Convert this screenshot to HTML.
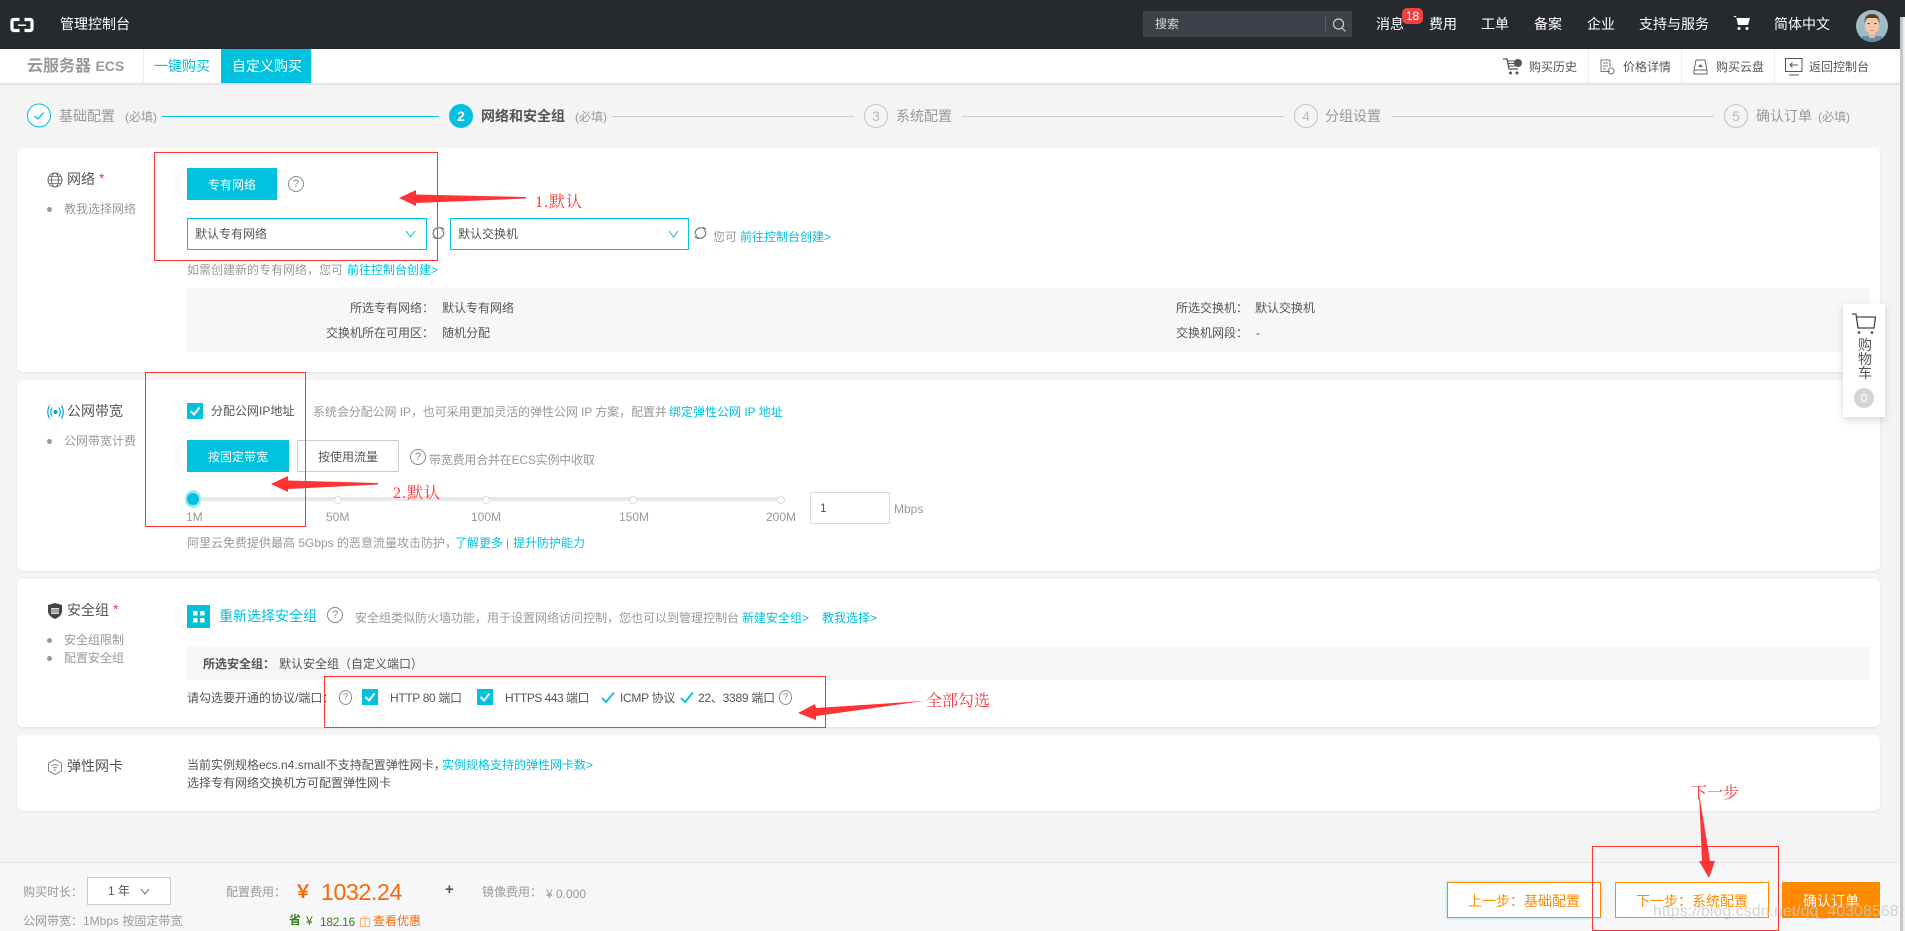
<!DOCTYPE html>
<html lang="zh"><head><meta charset="utf-8"><title>云服务器 ECS</title>
<style>
html,body{margin:0;padding:0;width:1905px;height:931px;overflow:hidden;background:#f4f4f5}
body{position:relative;font-family:"Liberation Sans","Noto Sans CJK SC",sans-serif;font-size:12px;color:#555}
.a{position:absolute;box-sizing:border-box}
.t{position:absolute;white-space:nowrap;line-height:20px;height:20px}
.g{color:#999}.d{color:#555}.l{color:#00c1de}.w{color:#fff}
.f14{font-size:14px}.f12{font-size:12px}
.card{position:absolute;left:17px;width:1863px;background:#fff;border-radius:6px;box-shadow:0 1px 2px rgba(0,0,0,.07)}
.q{position:absolute;width:16px;height:16px;box-sizing:border-box;border:1px solid #888;border-radius:50%;color:#888;font-size:11px;line-height:14px;text-align:center}
.st{position:absolute;width:24px;height:24px;top:104px;box-sizing:border-box;border:1px solid #c4c4c4;border-radius:50%;color:#bbb;font-size:14px;line-height:22px;text-align:center}
.ln{position:absolute;top:116px;height:1px;background:#ccc}
.dot{position:absolute;width:5px;height:5px;border-radius:50%;background:#999}
.btn{position:absolute;background:#00c1de;color:#fff;text-align:center;font-size:12px}
.chk{position:absolute;width:16px;height:16px;background:#00c1de}
.sl{position:absolute;top:496px;width:8px;height:8px;margin-left:-4px;background:#fff;border:1px solid #ddd;border-radius:50%;box-sizing:border-box}
.sel{position:absolute;top:218px;height:32px;box-sizing:border-box;border:1px solid #00c1de}
.div{position:absolute;top:49px;height:34px;width:1px;background:#eee}
.anno{position:absolute;white-space:nowrap;font-family:"Liberation Serif","Noto Serif CJK SC",serif;font-size:16px;color:#f33;line-height:20px}
</style></head><body>

<div class="a" style="left:0;top:0;width:1905px;height:49px;background:#262a2f"></div>
<svg class="a" style="left:10px;top:17px" width="24" height="16" viewBox="0 0 24 16"><path d="M9.500 2.500H4Q2 2.500 2 4.500V11.500Q2 13.500 4 13.500H9.500M14.500 2.500H20Q22 2.500 22 4.500V11.500Q22 13.500 20 13.500H14.500" fill="none" stroke="#fff" stroke-width="3.200"/><rect x="8" y="7.500" width="8" height="1.500" fill="#fff"/></svg>
<div class="t f14 w" style="left:60px;top:14px">管理控制台</div>

<div class="a" style="left:1143px;top:11px;width:209px;height:26px;background:#3e4147"></div>
<div class="t f12" style="left:1155px;top:14px;color:#d8d8d8">搜索</div>
<div class="a" style="left:1325px;top:16px;width:1px;height:16px;background:#5a5d62"></div>
<svg class="a" style="left:1332px;top:17px" width="15" height="16" viewBox="0 0 15 16"><circle cx="6.500" cy="7" r="5" fill="none" stroke="#ccc" stroke-width="1.200"/><path d="M10 11L13.500 14.500" stroke="#ccc" stroke-width="1.200"/></svg>

<div class="t f14 w" style="left:1376px;top:14px">消息</div>
<div class="a w" style="left:1402px;top:8px;width:21px;height:16px;background:#f04142;border-radius:5px;text-align:center;line-height:16px;font-size:12px">18</div>
<div class="t f14 w" style="left:1429px;top:14px">费用</div>
<div class="t f14 w" style="left:1481px;top:14px">工单</div>
<div class="t f14 w" style="left:1534px;top:14px">备案</div>
<div class="t f14 w" style="left:1587px;top:14px">企业</div>
<div class="t f14 w" style="left:1639px;top:14px">支持与服务</div>
<svg class="a" style="left:1733px;top:15px" width="18" height="16" viewBox="0 0 18 16"><path d="M0 1H3L5 10H15L17 3H4Z" fill="#fff"/><circle cx="6" cy="13.500" r="1.500" fill="#fff"/><circle cx="14" cy="13.500" r="1.500" fill="#fff"/></svg>
<div class="t f14 w" style="left:1774px;top:14px">简体中文</div>
<svg class="a" style="left:1856px;top:10px" width="32" height="32" viewBox="0 0 32 32"><defs><clipPath id="av"><circle cx="16" cy="16" r="16"/></clipPath></defs><g clip-path="url(#av)"><rect width="32" height="32" fill="#9fbcc6"/><rect x="6" y="26" width="20" height="8" fill="#5f8fa8"/><rect x="13" y="21" width="6" height="7" fill="#e8b596"/><ellipse cx="16" cy="15" rx="7" ry="9" fill="#f2c6a6"/><path d="M8.500 14Q8 4 16 4Q24 4 23.500 14Q22.500 8 20 8H12Q9.500 8 8.500 14Z" fill="#5a3c2e"/><rect x="11.500" y="13" width="2" height="1" fill="#333"/><rect x="18.500" y="13" width="2" height="1" fill="#333"/><rect x="14.500" y="20" width="3" height="1" fill="#c9806a"/></g></svg>

<div class="a" style="left:0;top:49px;width:1905px;height:34px;background:#fff;box-shadow:0 1px 3px rgba(0,0,0,.12)"></div>
<div class="t" style="left:27px;top:56px;font-size:16px;font-weight:bold;color:#999">云服务器 <span style="font-size:14px">ECS</span></div>
<div class="div" style="left:143px"></div>
<div class="t f14 l" style="left:154px;top:56px">一键购买</div>
<div class="a" style="left:221px;top:49px;width:90px;height:34px;background:#00c1de"></div>
<div class="t f14 w" style="left:232px;top:56px">自定义购买</div>

<svg class="a" style="left:1503px;top:58px" width="20" height="18" viewBox="0 0 20 18"><path d="M0 1H4L6 11H15" fill="none" stroke="#555" stroke-width="1.300"/><path d="M5 3H12M5.500 5.500H12M6 8H13" stroke="#555"/><circle cx="15" cy="5" r="4" fill="#555"/><circle cx="7.500" cy="15" r="1.500" fill="#555"/><circle cx="14" cy="15" r="1.500" fill="#555"/></svg>
<div class="t f12 d" style="left:1529px;top:57px">购买历史</div>
<div class="div" style="left:1588px"></div>
<svg class="a" style="left:1600px;top:59px" width="15" height="16" viewBox="0 0 15 16"><path d="M10 12.500H1V1H10V8M3 4H8M3 7H8M3 10H6" fill="none" stroke="#777"/><circle cx="11" cy="12" r="3" fill="none" stroke="#777"/></svg>
<div class="t f12 d" style="left:1623px;top:57px">价格详情</div>
<div class="div" style="left:1681px"></div>
<svg class="a" style="left:1693px;top:59px" width="15" height="16" viewBox="0 0 15 16"><path d="M3 1H12L14 11V15H1V11Z" fill="none" stroke="#666"/><path d="M1 11H14" stroke="#666"/><path d="M5 8L7.500 5L10 8Z" fill="#666"/></svg>
<div class="t f12 d" style="left:1716px;top:57px">购买云盘</div>
<div class="div" style="left:1774px"></div>
<svg class="a" style="left:1785px;top:58px" width="18" height="18" viewBox="0 0 18 18"><rect x=".5" y=".5" width="16.500" height="13" fill="none" stroke="#555"/><path d="M4 17H14" stroke="#555"/><path d="M13 7H5M7.500 4.500L5 7L7.500 9.500" fill="none" stroke="#555"/></svg>
<div class="t f12 d" style="left:1809px;top:57px">返回控制台</div>

<!-- steps -->
<svg class="a" style="left:27px;top:103px" width="24" height="25" viewBox="0 0 24 25"><circle cx="12" cy="12.500" r="11.500" fill="#fff" stroke="#00c1de"/><path d="M7.500 13L11 16L16.500 9.500" fill="none" stroke="#00c1de" stroke-width="1.300"/></svg>
<div class="t f14 g" style="left:59px;top:106px">基础配置</div>
<div class="t f12 g" style="left:125px;top:107px">(必填)</div>
<div class="ln" style="left:162px;width:277px;background:#00c1de"></div>
<div class="st" style="left:449px;border:0;background:#00c1de;color:#fff;font-weight:bold;line-height:24px">2</div>
<div class="t f14 d" style="left:481px;top:106px;font-weight:bold">网络和安全组</div>
<div class="t f12 g" style="left:575px;top:107px">(必填)</div>
<div class="ln" style="left:612px;width:242px"></div>
<div class="st" style="left:864px">3</div>
<div class="t f14 g" style="left:896px;top:106px">系统配置</div>
<div class="ln" style="left:962px;width:322px"></div>
<div class="st" style="left:1294px">4</div>
<div class="t f14 g" style="left:1325px;top:106px">分组设置</div>
<div class="ln" style="left:1392px;width:322px"></div>
<div class="st" style="left:1724px">5</div>
<div class="t f14 g" style="left:1756px;top:106px">确认订单</div>
<div class="t f12 g" style="left:1818px;top:107px">(必填)</div>

<!-- card 1 -->
<div class="card" style="top:148px;height:224px"></div>
<svg class="a" style="left:47px;top:172px" width="16" height="16" viewBox="0 0 16 16"><circle cx="8" cy="8" r="7" fill="none" stroke="#666"/><ellipse cx="8" cy="8" rx="3.500" ry="7" fill="none" stroke="#666"/><path d="M1 8H15M2 4.500H14M2 11.500H14" stroke="#666" stroke-width=".8"/></svg>
<div class="t f14 d" style="left:67px;top:169px">网络</div>
<div class="t f14" style="left:99px;top:168px;color:#f33">*</div>
<div class="dot" style="left:47px;top:207px"></div>
<div class="t f12 g" style="left:64px;top:199px">教我选择网络</div>
<div class="btn" style="left:187px;top:168px;width:90px;height:32px;line-height:34px">专有网络</div>
<div class="q" style="left:288px;top:176px">?</div>
<div class="sel" style="left:187px;width:240px"></div>
<div class="t f12 d" style="left:195px;top:224px">默认专有网络</div>
<svg class="a" style="left:405px;top:230px" width="11" height="8" viewBox="0 0 11 8"><path d="M1 1L5.500 7L10 1" fill="none" stroke="#00c1de"/></svg>
<svg class="a" style="left:431px;top:225px" width="15" height="16" viewBox="0 0 13 13"><path d="M2 8A5 5 0 0 1 10 3M11 5A5 5 0 0 1 3 10" fill="none" stroke="#777" stroke-width="1.100"/><path d="M8.500 1.500L11 3L9.500 5M4.500 11.500L2 10L3.500 8" fill="none" stroke="#777" stroke-width=".9"/></svg>
<div class="sel" style="left:450px;width:239px"></div>
<div class="t f12 d" style="left:458px;top:224px">默认交换机</div>
<svg class="a" style="left:668px;top:230px" width="11" height="8" viewBox="0 0 11 8"><path d="M1 1L5.500 7L10 1" fill="none" stroke="#00c1de"/></svg>
<svg class="a" style="left:693px;top:225px" width="15" height="16" viewBox="0 0 13 13"><path d="M2 8A5 5 0 0 1 10 3M11 5A5 5 0 0 1 3 10" fill="none" stroke="#777" stroke-width="1.100"/><path d="M8.500 1.500L11 3L9.500 5M4.500 11.500L2 10L3.500 8" fill="none" stroke="#777" stroke-width=".9"/></svg>
<div class="t f12 g" style="left:713px;top:227px">您可</div>
<div class="t f12 l" style="left:740px;top:227px">前往控制台创建&gt;</div>
<div class="t f12 g" style="left:187px;top:260px">如需创建新的专有网络，您可</div>
<div class="t f12 l" style="left:347px;top:260px">前往控制台创建&gt;</div>
<div class="a" style="left:187px;top:288px;width:1683px;height:64px;background:#f6f7f9"></div>
<div class="t f12 d" style="left:350px;top:298px">所选专有网络：</div>
<div class="t f12 d" style="left:442px;top:298px">默认专有网络</div>
<div class="t f12 d" style="left:326px;top:323px">交换机所在可用区：</div>
<div class="t f12 d" style="left:442px;top:323px">随机分配</div>
<div class="t f12 d" style="left:1176px;top:298px">所选交换机：</div>
<div class="t f12 d" style="left:1255px;top:298px">默认交换机</div>
<div class="t f12 d" style="left:1176px;top:323px">交换机网段：</div>
<div class="t f12 d" style="left:1256px;top:323px">-</div>

<!-- card 2 -->
<div class="card" style="top:380px;height:191px"></div>
<svg class="a" style="left:47px;top:404px" width="17" height="16" viewBox="0 0 17 16"><circle cx="8.500" cy="8" r="2" fill="#00a3d0"/><path d="M5 3.500Q2.500 8 5 12.500M12 3.500Q14.500 8 12 12.500" fill="none" stroke="#00a3d0" stroke-width="1.200"/><path d="M2.500 1.500Q-1 8 2.500 14.500M14.500 1.500Q18 8 14.500 14.500" fill="none" stroke="#00a3d0" stroke-width="1.200"/></svg>
<div class="t f14 d" style="left:67px;top:401px">公网带宽</div>
<div class="dot" style="left:47px;top:439px"></div>
<div class="t f12 g" style="left:64px;top:431px">公网带宽计费</div>
<div class="chk" style="left:187px;top:403px"></div>
<svg class="a" style="left:187px;top:403px" width="16" height="16" viewBox="0 0 16 16"><path d="M3.500 8L7 11.500L12.500 4.500" fill="none" stroke="#fff" stroke-width="2"/></svg>
<div class="t f12 d" style="left:211px;top:401px">分配公网IP地址</div>
<div class="t f12 g" style="left:313px;top:402px;letter-spacing:-.08px">系统会分配公网 IP，也可采用更加灵活的弹性公网 IP 方案，配置并</div>
<div class="t f12 l" style="left:669px;top:402px">绑定弹性公网 IP 地址</div>
<div class="btn" style="left:187px;top:440px;width:102px;height:32px;line-height:34px">按固定带宽</div>
<div class="a d" style="left:297px;top:440px;width:102px;height:32px;border:1px solid #ccc;text-align:center;line-height:32px">按使用流量</div>
<div class="q" style="left:410px;top:449px">?</div>
<div class="t f12 g" style="left:429px;top:450px;letter-spacing:-.2px">带宽费用合并在ECS实例中收取</div>
<div class="a" style="left:193px;top:497px;width:588px;height:4px;background:#e8e8e8"></div>
<div class="sl" style="left:338px"></div><div class="sl" style="left:486px"></div><div class="sl" style="left:633px"></div><div class="sl" style="left:781px"></div>
<div class="a" style="left:185px;top:490px;width:16px;height:18px;border-radius:50%;background:#9fe6f1"></div>
<div class="a" style="left:187px;top:493px;width:12px;height:12px;border-radius:50%;background:#00c1de"></div>
<div class="t f12 g" style="left:186px;top:507px">1M</div>
<div class="t f12 g" style="left:326px;top:507px">50M</div>
<div class="t f12 g" style="left:471px;top:507px">100M</div>
<div class="t f12 g" style="left:619px;top:507px">150M</div>
<div class="t f12 g" style="left:766px;top:507px">200M</div>
<div class="a" style="left:810px;top:492px;width:80px;height:32px;border:1px solid #ddd;background:#fff"></div>
<div class="t f12 d" style="left:820px;top:498px">1</div>
<div class="t f12 g" style="left:894px;top:499px">Mbps</div>
<div class="t f12 g" style="left:187px;top:533px">阿里云免费提供最高 5Gbps 的恶意流量攻击防护，</div>
<div class="t f12 l" style="left:455px;top:533px">了解更多</div>
<div class="t f12 g" style="left:506px;top:533px">|</div>
<div class="t f12 l" style="left:513px;top:533px">提升防护能力</div>

<!-- card 3 -->
<div class="card" style="top:579px;height:148px"></div>
<svg class="a" style="left:48px;top:603px" width="14" height="16" viewBox="0 0 14 16"><path d="M7 0L14 2V8Q14 13 7 16Q0 13 0 8V2Z" fill="#444"/><rect x="3" y="5" width="8" height="6" fill="#ddd"/><path d="M3 7H11M3 9H11" stroke="#444" stroke-width=".7"/></svg>
<div class="t f14 d" style="left:67px;top:600px">安全组</div>
<div class="t f14" style="left:113px;top:599px;color:#f33">*</div>
<div class="dot" style="left:47px;top:638px"></div>
<div class="t f12 g" style="left:64px;top:630px">安全组限制</div>
<div class="dot" style="left:47px;top:656px"></div>
<div class="t f12 g" style="left:64px;top:648px">配置安全组</div>
<div class="a" style="left:187px;top:605px;width:23px;height:23px;background:#00c1de"></div>
<svg class="a" style="left:187px;top:605px" width="23" height="23" viewBox="0 0 23 23"><path d="M6 6H10.500V10.500H6ZM13 6H17.500V10.500H13ZM6 13H10.500V17.500H6ZM13 13H17.500V17.500H13Z" fill="#fff"/></svg>
<div class="t f14 l" style="left:219px;top:606px">重新选择安全组</div>
<div class="q" style="left:327px;top:607px">?</div>
<div class="t f12 g" style="left:355px;top:608px">安全组类似防火墙功能，用于设置网络访问控制，您也可以到管理控制台</div>
<div class="t f12 l" style="left:742px;top:608px">新建安全组&gt;</div>
<div class="t f12 l" style="left:822px;top:608px">教我选择&gt;</div>
<div class="a" style="left:187px;top:646px;width:1683px;height:34px;background:#f6f7f9"></div>
<div class="t f12 d" style="left:203px;top:654px;font-weight:bold">所选安全组：</div>
<div class="t f12 d" style="left:279px;top:654px">默认安全组（自定义端口）</div>
<div class="t f12 d" style="left:187px;top:688px">请勾选要开通的协议/端口：</div>
<div class="q" style="left:339px;top:690px;width:13px;height:15px;line-height:13px;font-size:10px">?</div>
<div class="chk" style="left:362px;top:689px"></div>
<svg class="a" style="left:362px;top:689px" width="16" height="16" viewBox="0 0 16 16"><path d="M3.500 8L7 11.500L12.500 4.500" fill="none" stroke="#fff" stroke-width="2"/></svg>
<div class="t f12 d" style="left:390px;top:688px;letter-spacing:-.35px">HTTP 80 端口</div>
<div class="chk" style="left:477px;top:689px"></div>
<svg class="a" style="left:477px;top:689px" width="16" height="16" viewBox="0 0 16 16"><path d="M3.500 8L7 11.500L12.500 4.500" fill="none" stroke="#fff" stroke-width="2"/></svg>
<div class="t f12 d" style="left:505px;top:688px;letter-spacing:-.5px">HTTPS 443 端口</div>
<svg class="a" style="left:601px;top:691px" width="14" height="13" viewBox="0 0 14 13"><path d="M1 7L5 11L13 1.500" fill="none" stroke="#00c1de" stroke-width="1.800"/></svg>
<div class="t f12 d" style="left:620px;top:688px;letter-spacing:-.3px">ICMP 协议</div>
<svg class="a" style="left:680px;top:691px" width="14" height="13" viewBox="0 0 14 13"><path d="M1 7L5 11L13 1.500" fill="none" stroke="#00c1de" stroke-width="1.800"/></svg>
<div class="t f12 d" style="left:698px;top:688px;letter-spacing:-.25px">22、3389 端口</div>
<div class="q" style="left:779px;top:690px;width:13px;height:15px;line-height:13px;font-size:10px">?</div>

<!-- card 4 -->
<div class="card" style="top:735px;height:76px"></div>
<svg class="a" style="left:48px;top:759px" width="14" height="16" viewBox="0 0 14 16"><path d="M7 .5L13.500 4V12L7 15.500L.5 12V4Z" fill="none" stroke="#888"/><path d="M3.500 7Q7 4 10.500 7M5 9Q7 7.500 9 9" fill="none" stroke="#888"/><circle cx="7" cy="11" r=".9" fill="#888"/></svg>
<div class="t f14 d" style="left:67px;top:756px">弹性网卡</div>
<div class="t f12 d" style="left:187px;top:755px">当前实例规格ecs.n4.small不支持配置弹性网卡，</div>
<div class="t f12 l" style="left:442px;top:755px">实例规格支持的弹性网卡数&gt;</div>
<div class="t f12 d" style="left:187px;top:773px">选择专有网络交换机方可配置弹性网卡</div>

<!-- footer -->
<div class="a" style="left:0;top:862px;width:1905px;height:69px;background:#f6f7f9;border-top:1px solid #e8e8e8"></div>
<div class="t f12 g" style="left:23px;top:882px">购买时长：</div>
<div class="a d" style="left:87px;top:877px;width:84px;height:28px;border:1px solid #ccc;background:#fff"></div>
<div class="t f12 d" style="left:108px;top:881px">1 年</div>
<svg class="a" style="left:140px;top:888px" width="10" height="7" viewBox="0 0 10 7"><path d="M1 1L5 6L9 1" fill="none" stroke="#666"/></svg>
<div class="t f12 g" style="left:226px;top:882px">配置费用：</div>
<div class="t" style="left:294px;top:882px;font-size:18px;font-weight:bold;color:#f60">￥</div>
<div class="t" style="left:321px;top:882px;font-size:23px;letter-spacing:-.3px;color:#f60">1032.24</div>
<div class="t" style="left:445px;top:880px;font-size:15px;font-weight:bold;color:#555">+</div>
<div class="t f12 g" style="left:482px;top:882px">镜像费用：</div>
<div class="t f12 g" style="left:546px;top:884px">¥ 0.000</div>
<div class="t f12 g" style="left:23px;top:911px">公网带宽：1Mbps 按固定带宽</div>
<div class="t f12" style="left:289px;top:910px;color:#3a7d1e;font-weight:bold">省</div>
<div class="t f12" style="left:306px;top:911px;color:#3a7d1e">¥</div>
<div class="t f12" style="left:320px;top:912px;letter-spacing:-.3px;color:#3a7d1e">182.16</div>
<svg class="a" style="left:360px;top:915px" width="10" height="12" viewBox="0 0 10 12"><path d="M.5 3.500H9.500V11.500H.5ZM5 3.500V11.500M2.500 1L5 3.500L7.500 1" fill="none" stroke="#f8b27a"/></svg>
<div class="t f12" style="left:373px;top:911px;color:#f60">查看优惠</div>
<div class="a" style="left:1447px;top:882px;width:154px;height:36px;border:1px solid #ff8a00;background:#fff;box-shadow:0 0 3px #7fdfee"></div>
<div class="t f14" style="left:1468px;top:891px;color:#ff8a00">上一步：基础配置</div>
<div class="a" style="left:1615px;top:882px;width:154px;height:36px;border:1px solid #ff8a00;background:#fff"></div>
<div class="t f14" style="left:1636px;top:891px;color:#ff8a00">下一步：系统配置</div>
<div class="a" style="left:1782px;top:882px;width:98px;height:36px;background:#ff8a00"></div>
<div class="t f14 w" style="left:1803px;top:891px">确认订单</div>

<!-- floating cart -->
<div class="a" style="left:1843px;top:304px;width:42px;height:113px;background:#fff;box-shadow:0 3px 8px rgba(0,0,0,.15)"></div>
<svg class="a" style="left:1852px;top:313px" width="24" height="22" viewBox="0 0 24 22"><path d="M0 1H4L6 15H22L23.500 4H4.500" fill="none" stroke="#444" stroke-width="1.300"/><circle cx="7" cy="19.500" r="1.300" fill="#444"/><circle cx="20" cy="19.500" r="1.300" fill="#444"/></svg>
<div class="t f14 d" style="left:1858px;top:335px">购</div>
<div class="t f14 d" style="left:1858px;top:349px">物</div>
<div class="t f14 d" style="left:1858px;top:363px">车</div>
<div class="a w" style="left:1854px;top:388px;width:20px;height:20px;border-radius:50%;background:#d5d5d5;text-align:center;line-height:20px;font-size:12px">0</div>

<!-- scrollbar -->
<div class="a" style="left:1900px;top:17px;width:5px;height:914px;background:#efefef"></div>
<div class="a" style="left:1900px;top:17px;width:3px;height:914px;background:#c6c6c6"></div>

<!-- annotations -->
<svg class="a" style="left:0;top:0" width="1905" height="931" viewBox="0 0 1905 931">
<g fill="none" stroke="#f33" stroke-width="1">
<rect x="154.500" y="152.500" width="283" height="108"/>
<rect x="145.500" y="372.500" width="160" height="154"/>
<rect x="324.500" y="676.500" width="501" height="51"/>
<rect x="1592.500" y="846.500" width="186" height="84"/>
</g>
<g fill="#f33">
<path d="M399 198L416 190V194.500L526 197V198.500L416 203V206Z"/>
<path d="M271 484L288 476V480.500L378 483V484.500L288 489V492Z"/>
<path d="M798 713L815 704L816 708L924 701L816 716L816 720Z"/>
<path d="M1699 793L1710 861H1715L1709 878L1699 861H1702Z"/>
</g>
</svg>
<div class="anno" style="left:535px;top:193px;letter-spacing:1px">1.默认</div>
<div class="anno" style="left:393px;top:484px;letter-spacing:1px">2.默认</div>
<div class="anno" style="left:926px;top:692px">全部勾选</div>
<div class="anno" style="left:1691px;top:784px">下一步</div>
<div class="t" style="left:1653px;top:902px;font-size:16px;color:rgba(200,200,200,.8)">https://blog.csdn.net/qq_40308568</div>
</body></html>
